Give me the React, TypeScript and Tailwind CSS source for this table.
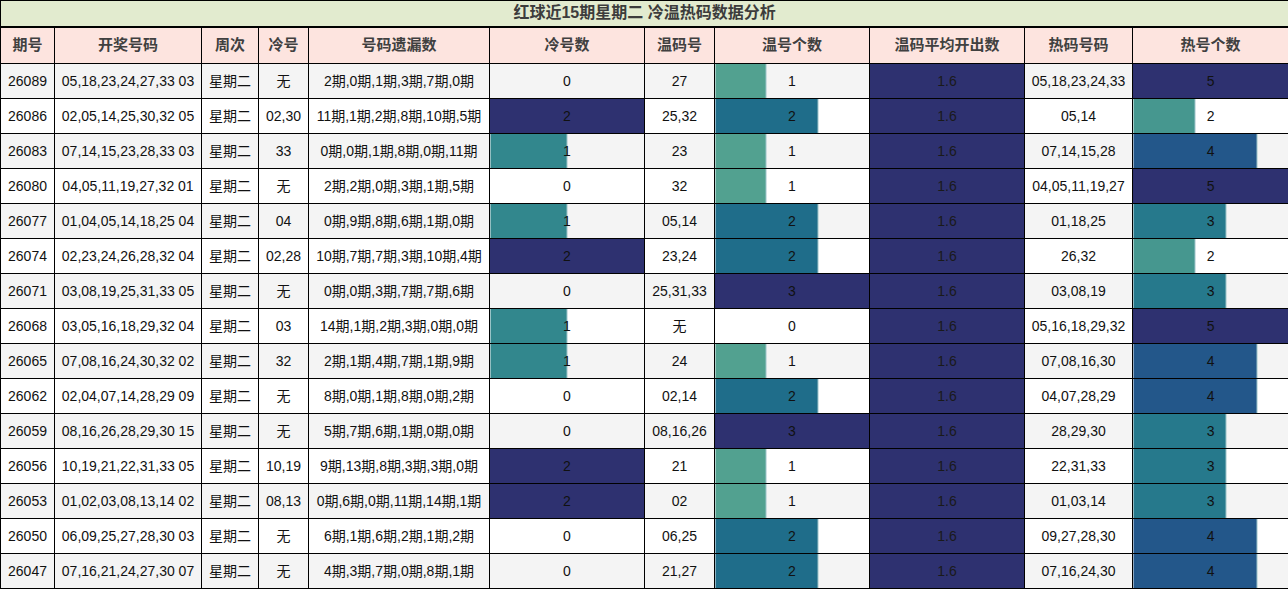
import React from 'react';

type Row = {
  qi: string;
  kj: string;
  leng: string;
  yl: string;
  lengN: number;
  wen: string;
  wenN: number;
  re: string;
  reN: number;
};

const rows: Row[] = [
  { qi: '26089', kj: '05,18,23,24,27,33 03', leng: '无', yl: '2期,0期,1期,3期,7期,0期', lengN: 0, wen: '27', wenN: 1, re: '05,18,23,24,33', reN: 5 },
  { qi: '26086', kj: '02,05,14,25,30,32 05', leng: '02,30', yl: '11期,1期,2期,8期,10期,5期', lengN: 2, wen: '25,32', wenN: 2, re: '05,14', reN: 2 },
  { qi: '26083', kj: '07,14,15,23,28,33 03', leng: '33', yl: '0期,0期,1期,8期,0期,11期', lengN: 1, wen: '23', wenN: 1, re: '07,14,15,28', reN: 4 },
  { qi: '26080', kj: '04,05,11,19,27,32 01', leng: '无', yl: '2期,2期,0期,3期,1期,5期', lengN: 0, wen: '32', wenN: 1, re: '04,05,11,19,27', reN: 5 },
  { qi: '26077', kj: '01,04,05,14,18,25 04', leng: '04', yl: '0期,9期,8期,6期,1期,0期', lengN: 1, wen: '05,14', wenN: 2, re: '01,18,25', reN: 3 },
  { qi: '26074', kj: '02,23,24,26,28,32 04', leng: '02,28', yl: '10期,7期,7期,3期,10期,4期', lengN: 2, wen: '23,24', wenN: 2, re: '26,32', reN: 2 },
  { qi: '26071', kj: '03,08,19,25,31,33 05', leng: '无', yl: '0期,0期,3期,7期,7期,6期', lengN: 0, wen: '25,31,33', wenN: 3, re: '03,08,19', reN: 3 },
  { qi: '26068', kj: '03,05,16,18,29,32 04', leng: '03', yl: '14期,1期,2期,3期,0期,0期', lengN: 1, wen: '无', wenN: 0, re: '05,16,18,29,32', reN: 5 },
  { qi: '26065', kj: '07,08,16,24,30,32 02', leng: '32', yl: '2期,1期,4期,7期,1期,9期', lengN: 1, wen: '24', wenN: 1, re: '07,08,16,30', reN: 4 },
  { qi: '26062', kj: '02,04,07,14,28,29 09', leng: '无', yl: '8期,0期,1期,8期,0期,2期', lengN: 0, wen: '02,14', wenN: 2, re: '04,07,28,29', reN: 4 },
  { qi: '26059', kj: '08,16,26,28,29,30 15', leng: '无', yl: '5期,7期,6期,1期,0期,0期', lengN: 0, wen: '08,16,26', wenN: 3, re: '28,29,30', reN: 3 },
  { qi: '26056', kj: '10,19,21,22,31,33 05', leng: '10,19', yl: '9期,13期,8期,3期,3期,0期', lengN: 2, wen: '21', wenN: 1, re: '22,31,33', reN: 3 },
  { qi: '26053', kj: '01,02,03,08,13,14 02', leng: '08,13', yl: '0期,6期,0期,11期,14期,1期', lengN: 2, wen: '02', wenN: 1, re: '01,03,14', reN: 3 },
  { qi: '26050', kj: '06,09,25,27,28,30 03', leng: '无', yl: '6期,1期,6期,2期,1期,2期', lengN: 0, wen: '06,25', wenN: 2, re: '09,27,28,30', reN: 4 },
  { qi: '26047', kj: '07,16,21,24,27,30 07', leng: '无', yl: '4期,3期,7期,0期,8期,1期', lengN: 0, wen: '21,27', wenN: 2, re: '07,16,24,30', reN: 4 },
];

const NAVY = '#2e3170';

// data bar colour per value, by column max
const lengColors: Record<number, string> = { 1: '#32878d', 2: NAVY };
const wenColors: Record<number, string> = { 1: '#52a190', 2: '#1f6d8a', 3: NAVY };
const reColors: Record<number, string> = { 2: '#46978f', 3: '#26798c', 4: '#23578a', 5: NAVY };

const barStyle = (v: number, max: number, colors: Record<number, string>) => {
  if (!v) return undefined;
  const pct = (v / max) * 100;
  const c = colors[v];
  if (pct >= 100) return { background: c };
  return {
    background: `linear-gradient(to right, ${c} 0, ${c} calc(${pct}% - 1px), #9cc3c8 calc(${pct}% - 1px), #9cc3c8 ${pct}%, transparent ${pct}%)`,
  };
};

const headers = ['期号', '开奖号码', '周次', '冷号', '号码遗漏数', '冷号数', '温码号', '温号个数', '温码平均开出数', '热码号码', '热号个数'];
const widths = [54, 147, 57, 50, 181, 155, 70, 155, 155, 108, 156];

const App = () => {
  return (
    <div className="w-[1288px] h-[589px] overflow-hidden bg-white font-['Liberation_Sans','Noto_Sans_CJK_SC',sans-serif]">
      <table className="w-[1288px] table-fixed border-collapse">
        <colgroup>
          {widths.map((w, i) => (
            <col key={i} style={{ width: w }} />
          ))}
        </colgroup>
        <thead>
          <tr className="h-[26px]">
            <th colSpan={11} className="border border-b-2 border-black bg-[#e2ebcf] p-0 text-center text-[16px] font-bold leading-none text-[#3c3c3c]">
              红球近15期星期二 冷温热码数据分析
            </th>
          </tr>
          <tr className="h-[37px]">
            {headers.map((h) => (
              <th key={h} className="border border-black bg-[#fde4df] p-0 text-center text-[15px] font-bold text-[#404040]">
                {h}
              </th>
            ))}
          </tr>
        </thead>
        <tbody>
          {rows.map((r, i) => (
            <tr key={r.qi} className={`h-[35px] text-[14px] text-[#111] ${i % 2 === 0 ? 'bg-[#f4f4f4]' : 'bg-white'}`}>
              <td className="border border-black p-0 text-center">{r.qi}</td>
              <td className="border border-black p-0 text-center">{r.kj}</td>
              <td className="border border-black p-0 text-center">星期二</td>
              <td className="border border-black p-0 text-center">{r.leng}</td>
              <td className="border border-black p-0 text-center whitespace-nowrap">{r.yl}</td>
              <td className="border border-black p-0 text-center" style={barStyle(r.lengN, 2, lengColors)}>{r.lengN}</td>
              <td className="border border-black p-0 text-center">{r.wen}</td>
              <td className="border border-black p-0 text-center" style={barStyle(r.wenN, 3, wenColors)}>{r.wenN}</td>
              <td className="border border-black bg-[#2e3170] p-0 text-center text-[#1a1a1a]">1.6</td>
              <td className="border border-black p-0 text-center">{r.re}</td>
              <td className="border border-black p-0 text-center" style={barStyle(r.reN, 5, reColors)}>{r.reN}</td>
            </tr>
          ))}
        </tbody>
      </table>
    </div>
  );
};

export default App;
